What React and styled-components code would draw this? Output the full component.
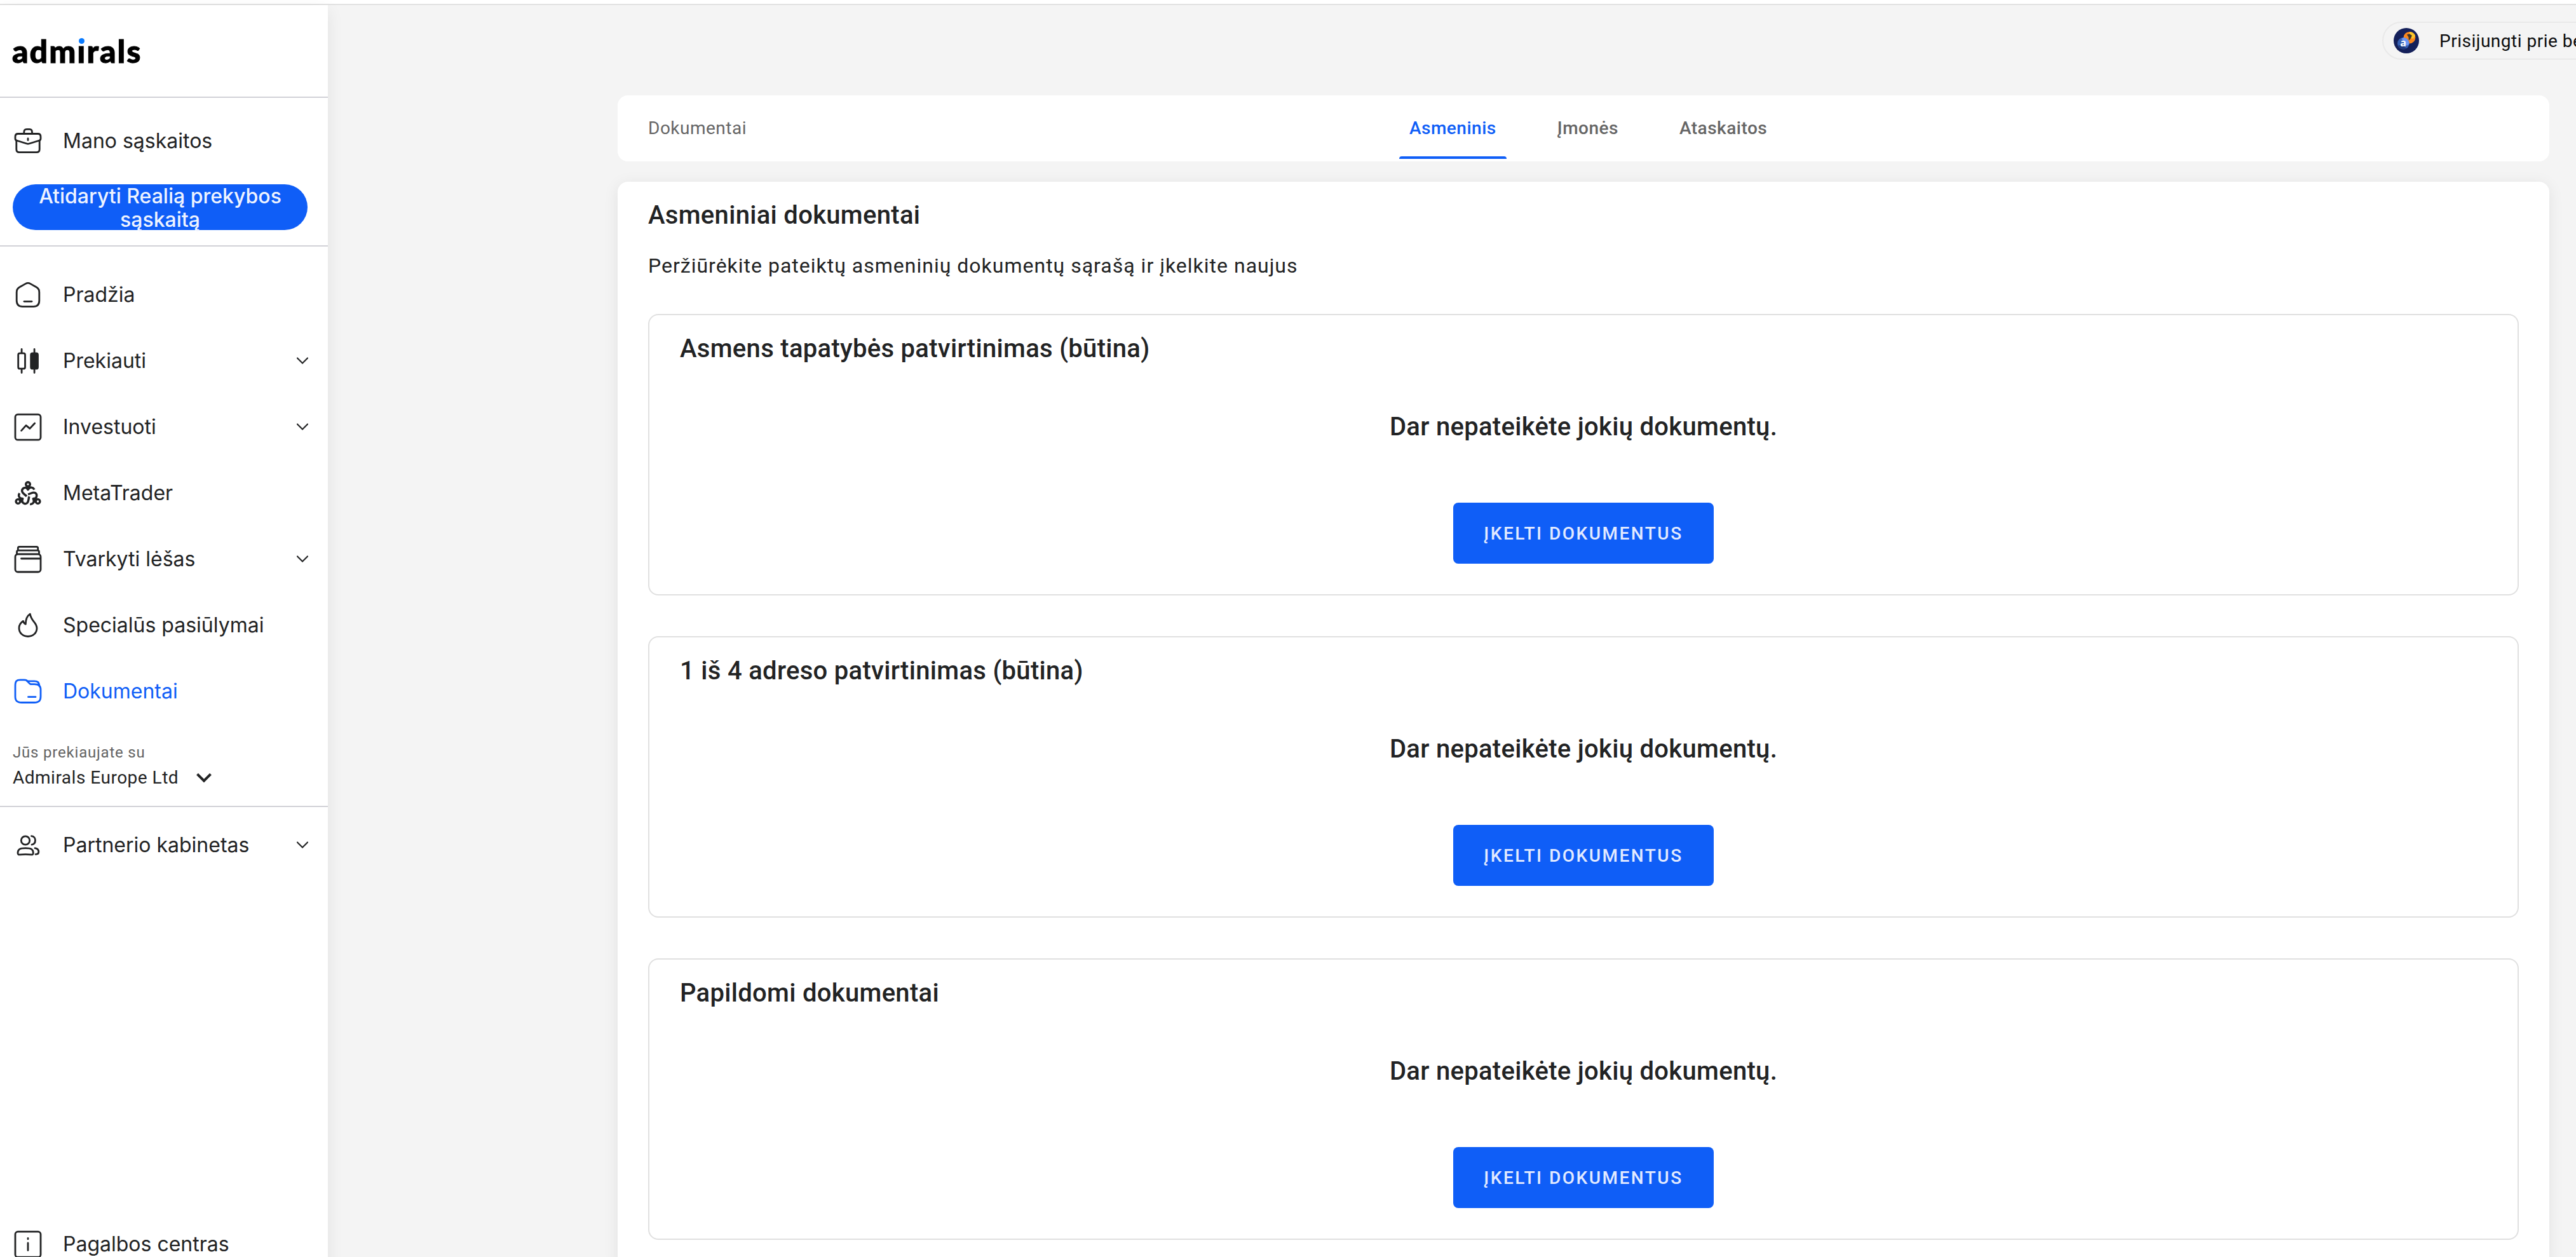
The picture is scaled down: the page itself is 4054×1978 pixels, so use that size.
import styled, { createGlobalStyle } from "styled-components";

const documents = [
    "Asmens tapatybės patvirtinimas (būtina)",
    "1 iš 4 adreso patvirtinimas (būtina)",
    "Papildomi dokumentai",
]

const menu = [
    { name: "Pradžia", icon: <HomeIcon /> },
    { name: "Prekiauti", icon: <CandlesIcon />, expandable: true },
    { name: "Investuoti", icon: <InvestIcon />, expandable: true },
    { name: "MetaTrader", icon: <MetaTraderIcon /> },
    { name: "Tvarkyti lėšas", icon: <WalletIcon />, expandable: true },
    { name: "Specialūs pasiūlymai", icon: <FlameIcon /> },
    { name: "Dokumentai", icon: <FolderIcon />, active: true },
]

export default function App() {
    return (
        <>
            <GlobalStyle />
            <Page>
                <BrowserEdge />
                <Layout>
                    <Sidebar />
                    <Main>
                        <TopBar>
                            <CommunityLink>
                                <Avatar />
                                <span>Prisijungti prie be</span>
                            </CommunityLink>
                        </TopBar>
                        <Content>
                            <TabsCard>
                                <Breadcrumb>Dokumentai</Breadcrumb>
                                <Tabs>
                                    <Tab $active>Asmeninis</Tab>
                                    <Tab>Įmonės</Tab>
                                    <Tab>Ataskaitos</Tab>
                                </Tabs>
                            </TabsCard>
                            <DocumentsCard>
                                <Title>Asmeniniai dokumentai</Title>
                                <Description>Peržiūrėkite pateiktų asmeninių dokumentų sąrašą ir įkelkite naujus</Description>
                                <DocumentList>
                                    {documents.map((name) => (
                                        <DocumentBox key={name}>
                                            <BoxTitle>{name}</BoxTitle>
                                            <Empty>Dar nepateikėte jokių dokumentų.</Empty>
                                            <UploadButton>ĮKELTI DOKUMENTUS</UploadButton>
                                        </DocumentBox>
                                    ))}
                                </DocumentList>
                            </DocumentsCard>
                        </Content>
                    </Main>
                </Layout>
            </Page>
        </>
    )
}

function Sidebar() {
    return (
        <Side>
            <LogoArea>
                <Logo>adm<LogoI>ı</LogoI>rals</Logo>
            </LogoArea>
            <Accounts>
                <MenuItem name="Mano sąskaitos" icon={<BriefcaseIcon />} />
                <OpenAccount>Atidaryti Realią prekybos sąskaitą</OpenAccount>
            </Accounts>
            <Menu>
                {menu.map((item) => <MenuItem key={item.name} {...item} />)}
            </Menu>
            <Company>
                <CompanyLabel>Jūs prekiaujate su</CompanyLabel>
                <CompanyName>
                    Admirals Europe Ltd
                    <svg width="24" height="16" viewBox="0 0 24 16" fill="none" stroke="#222324" strokeWidth="4">
                        <path d="M1.5 2.2 12 12.7 22.5 2.2" />
                    </svg>
                </CompanyName>
            </Company>
            <MenuItem name="Partnerio kabinetas" icon={<PartnersIcon />} expandable />
            <Help>
                <MenuItem name="Pagalbos centras" icon={<InfoIcon />} />
            </Help>
        </Side>
    )
}

function MenuItem({ name, icon, active, expandable }) {
    return (
        <Item $active={active}>
            {icon}
            <ItemName>{name}</ItemName>
            {expandable && (
                <svg width="18" height="12" viewBox="0 0 18 12" fill="none" stroke="currentColor" strokeWidth="2.2" strokeLinecap="round">
                    <path d="M1 1.5 9 9.5 17 1.5" />
                </svg>
            )}
        </Item>
    )
}

function BriefcaseIcon() {
    return (
        <Icon>
            <path d="M17.8 12v-2q0-4.7 4.2-4.7h4.5q4 0 4 4.7v2" />
            <path d="M5.8 23Q4 22.3 4 20v-3q0-4.5 4.5-4.5h31Q44 12.5 44 17v3q0 2.3-1.8 3L26 28q-2 .6-4 0Z" />
            <path d="M5.8 23v14q0 4.7 4.7 4.7h27q4.700 0 4.700-4.700V23" />
            <path d="M24 20v2.500" />
        </Icon>
    )
}

function HomeIcon() {
    return (
        <Icon>
            <path d="M6.200 20q0-5.500 4.300-8L20 6.600q4-2.400 8 0l9.500 5.400q4.300 2.500 4.300 8v13q0 9.300-9 9.300H15.200q-9 0-9-9.300Z" />
            <path d="M18 34.300h12" />
        </Icon>
    )
}

function CandlesIcon() {
    return (
        <Icon>
            <rect x="8.700" y="11.800" width="10.800" height="24.400" rx="2.500" />
            <path d="M14.100 5.500v6M14.100 37v5.500M34.100 5.500v6M34.100 37v5.500" />
            <Filled as="rect" x="28.700" y="11.800" width="10.800" height="24.400" rx="2.500" />
        </Icon>
    )
}

function InvestIcon() {
    return (
        <Icon>
            <rect x="4" y="4.200" width="40" height="40" rx="4" />
            <path d="M13.600 29.600 21 21.400l5.900 5L34.700 18" />
        </Icon>
    )
}

function MetaTraderIcon() {
    return (
        <Icon>
            {[0, 120, 240].map((angle) => (
                <g key={angle} transform={`rotate(${angle} 24 28)`}>
                    <circle cx="24" cy="10" r="3.300" />
                    <path d="M34 18.500C32 14.300 27.500 14 24 17.200c-4-3.600-9.500-1.200-9.400 3.300.1 3.500 3.400 4.500 7.400 8.500" strokeLinecap="butt" />
                    <Filled d="M21 15h6l-3 3.500Z" />
                </g>
            ))}
        </Icon>
    )
}

function WalletIcon() {
    return (
        <Icon>
            <path d="M8.300 9V6.500q0-2.200 2.200-2.200h27q2.200 0 2.200 2.200V9" />
            <path d="M6.500 15v-2.500q0-2.300 2.500-2.300h30q2.500 0 2.500 2.300V15" />
            <rect x="4" y="16" width="40" height="28" rx="4" />
            <path d="M13.500 23H43" />
        </Icon>
    )
}

function FlameIcon() {
    return (
        <Icon>
            <path d="M27.300 6.200c-4.600 3-6.900 8.300-7 16-2-1-3.400-2.600-3.800-4.900-4 2.500-6.500 6.500-6.500 11.200 0 7.500 6 13 14 13s14-5.500 14-13c0-8.500-8.500-10.500-10.700-22.300Z" />
        </Icon>
    )
}

function FolderIcon() {
    return (
        <Icon>
            <path d="M4 15c0-7 2-9.200 8-9.200h6c4 0 4.700 1.200 7 4.200 2 2.700 3 2.700 6 2.700h3c7 0 10 2.300 10 8.300v11c0 7-3 9.500-10 9.500H14C7 41.500 4 39 4 32Z" />
            <path d="M22.500 7.800H34c5.500 0 7.500 2 8 8.200" />
            <path d="M24.500 32.700h11.500" />
        </Icon>
    )
}

function PartnersIcon() {
    return (
        <Icon>
            <circle cx="20" cy="16.500" r="6.700" />
            <path d="M29.500 9.700c4 .3 6 3.200 6 6.600 0 3.700-2.200 6.400-5.500 6.800" />
            <path d="M8 36.300c0-5.800 3-7.600 12.200-7.600s12.100 1.800 12.100 7.600c0 2.200-1.300 2.900-3.300 2.600-6-.8-11.700-.8-17.700 0-2 .3-3.300-.4-3.300-2.600Z" />
            <path d="M35 28.700c4.300.6 5.800 2.300 5.800 5.800 0 2.600-1.600 3.800-4.800 3.800" />
        </Icon>
    )
}

function InfoIcon() {
    return (
        <Icon>
            <rect x="4" y="4.200" width="40" height="40" rx="4" />
            <path d="M24 14.500v1.300M24 22v11.500" />
        </Icon>
    )
}

function Avatar() {
    return (
        <svg width="40" height="40" viewBox="0 0 40 40">
            <circle cx="20" cy="20" r="20" fill="#14205a" />
            <circle cx="25" cy="15.200" r="9.300" fill="#f9861d" />
            <path d="M25 15.200V5.900a9.300 9.300 0 0 1 9 6.500l-3 4.500Z" fill="#fcc62b" />
            <path d="m20.800 10.500 4-1.200 4 2.500-1 3-2.300 3.700-1.700.6-.3-4.500Z" fill="#41372c" />
            <circle cx="15.300" cy="24.300" r="9.300" fill="#3560b5" />
            <path d="M15.300 15a9.300 9.300 0 0 1 9 11l-4 2-8-11Z" fill="#6a97f5" />
            <path d="M7 27.500c1.500 3.500 4.500 6 8.300 6.100 2 0 4-.6 5.500-1.800L11 27Z" fill="#1f3a7e" />
            <text x="15.300" y="29" fill="#fff" fontFamily="Open Sans, sans-serif" fontSize="16" fontWeight="700" textAnchor="middle">a</text>
        </svg>
    )
}

const GlobalStyle = createGlobalStyle`
* {
    box-sizing: border-box;
}
body {
    margin: 0;
    background-color: #f4f4f4;
    color: #222324;
    font-family: Roboto, sans-serif;
}
`

const Page = styled.div`
height: 1978px;
overflow: hidden;
`

const BrowserEdge = styled.div`
height: 8px;
background-color: #FFFFFF;
border-bottom: 2px solid #e2e2e2;
`

const Layout = styled.div`
display: flex;
align-items: flex-start;
`

const Side = styled.aside`
display: flex;
flex-direction: column;
flex-shrink: 0;
width: 516px;
height: 2002px;
background-color: #FFFFFF;
box-shadow: 0 8px 24px rgba(0, 0, 0, 0.08);
font-family: Inter, sans-serif;
`

const LogoArea = styled.div`
display: flex;
align-items: center;
height: 146px;
padding: 0 0 1px 19px;
border-bottom: 2px solid #d2d2d7;
`

const Logo = styled.div`
font-family: Lato, sans-serif;
font-size: 50px;
font-weight: 900;
letter-spacing: 2px;
line-height: 60px;
color: #000000;
-webkit-text-stroke: 1px #000000;
`

const LogoI = styled.span`
position: relative;
&::after {
    content: "";
    position: absolute;
    left: 3px;
    top: 10px;
    width: 9px;
    height: 9px;
    border-radius: 50%;
    background-color: #0a7bff;
}
`

const Accounts = styled.div`
padding: 16px 0 24px;
border-bottom: 2px solid #d2d2d7;
`

const OpenAccount = styled.button`
display: block;
width: 464px;
height: 72px;
margin: 16px 0 0 20px;
padding: 0 32px 4px;
border: none;
border-radius: 36px;
background-color: #0f5ef7;
color: #eef3ff;
font-family: Inter, sans-serif;
font-size: 32px;
font-weight: 500;
line-height: 37px;
`

const Menu = styled.nav`
padding-top: 24px;
`

const Item = styled.div`
display: flex;
align-items: center;
height: 104px;
flex-shrink: 0;
padding: 0 31px 0 20px;
color: ${(props) => props.$active ? "#0f5ef7" : "#222324"};
`

const ItemName = styled.span`
flex: 1;
margin-left: 31px;
padding-bottom: 2px;
font-size: 32px;
white-space: nowrap;
`

const Icon = styled.svg.attrs({ viewBox: "0 0 48 48" })`
width: 48px;
height: 48px;
flex-shrink: 0;
fill: none;
stroke: currentColor;
stroke-width: 2.8px;
stroke-linecap: round;
stroke-linejoin: round;
g {
    stroke-width: 3.4px;
}
`

const Filled = styled.path`
fill: currentColor;
`

const Company = styled.div`
margin-bottom: 8px;
padding: 24px 20px;
border-bottom: 2px solid #d2d2d7;
font-family: Roboto, sans-serif;
`

const CompanyLabel = styled.div`
font-size: 24px;
line-height: 40px;
letter-spacing: 0.8px;
color: #646464;
`

const CompanyName = styled.div`
display: flex;
align-items: center;
gap: 28px;
font-size: 28px;
line-height: 40px;
letter-spacing: 0.5px;
`

const Help = styled.div`
margin-top: auto;
`

const Main = styled.main`
flex: 1;
min-width: 0;
`

const TopBar = styled.header`
display: flex;
height: 142px;
padding: 26px 0 0 3233px;
`

const CommunityLink = styled.div`
display: flex;
align-items: center;
gap: 32px;
flex-shrink: 0;
width: 500px;
height: 60px;
padding: 0 16px;
border: 2px solid #e9e9e9;
border-radius: 30px;
color: #0c0d0e;
font-size: 28px;
letter-spacing: 0.5px;
white-space: nowrap;
`

const Content = styled.div`
display: flex;
flex-direction: column;
gap: 32px;
width: 3040px;
margin-left: 456px;
`

const TabsCard = styled.div`
display: flex;
align-items: center;
height: 104px;
padding-left: 48px;
border-radius: 16px;
background-color: #FFFFFF;
`

const Breadcrumb = styled.div`
flex: 0 0 1182px;
padding-bottom: 1px;
font-size: 28px;
letter-spacing: 0.5px;
color: #666666;
`

const Tabs = styled.div`
display: flex;
gap: 64px;
`

const Tab = styled.div`
position: relative;
padding: 0 16px;
font-size: 28px;
font-weight: 500;
line-height: 104px;
letter-spacing: 0.5px;
color: ${(props) => props.$active ? "#0f5ef7" : "#666666"};
&::after {
    content: "";
    display: ${(props) => props.$active ? "block" : "none"};
    position: absolute;
    left: 0;
    right: 0;
    bottom: 4px;
    height: 4px;
    border-radius: 4px 4px 0 0;
    background-color: #0f5ef7;
}
`

const DocumentsCard = styled.section`
padding: 25px 48px 48px;
border-radius: 16px;
background-color: #FFFFFF;
box-shadow: 0 4px 24px rgba(0, 0, 0, 0.08);
`

const Title = styled.h1`
margin: 0 0 27px;
font-size: 40px;
font-weight: 500;
line-height: 56px;
letter-spacing: 0.3px;
`

const Description = styled.p`
margin: 0 0 52px;
font-size: 32px;
line-height: 48px;
letter-spacing: 1px;
`

const DocumentList = styled.div`
display: flex;
flex-direction: column;
gap: 64px;
`

const DocumentBox = styled.div`
display: flex;
flex-direction: column;
align-items: center;
height: 443px;
padding: 29px 48px 0;
border: 2px solid #e0e0e0;
border-radius: 16px;
`

const BoxTitle = styled.h2`
align-self: flex-start;
margin: 0;
font-size: 40px;
font-weight: 500;
line-height: 48px;
letter-spacing: 0.3px;
`

const Empty = styled.div`
margin: 75px 0 95px;
font-size: 40px;
font-weight: 500;
line-height: 48px;
letter-spacing: 0.3px;
`

const UploadButton = styled.button`
width: 410px;
height: 96px;
padding: 0;
border: none;
border-radius: 8px;
background-color: #0f5ef7;
color: #e2eaff;
font-family: Roboto, sans-serif;
font-size: 28px;
font-weight: 500;
letter-spacing: 2.5px;
`
